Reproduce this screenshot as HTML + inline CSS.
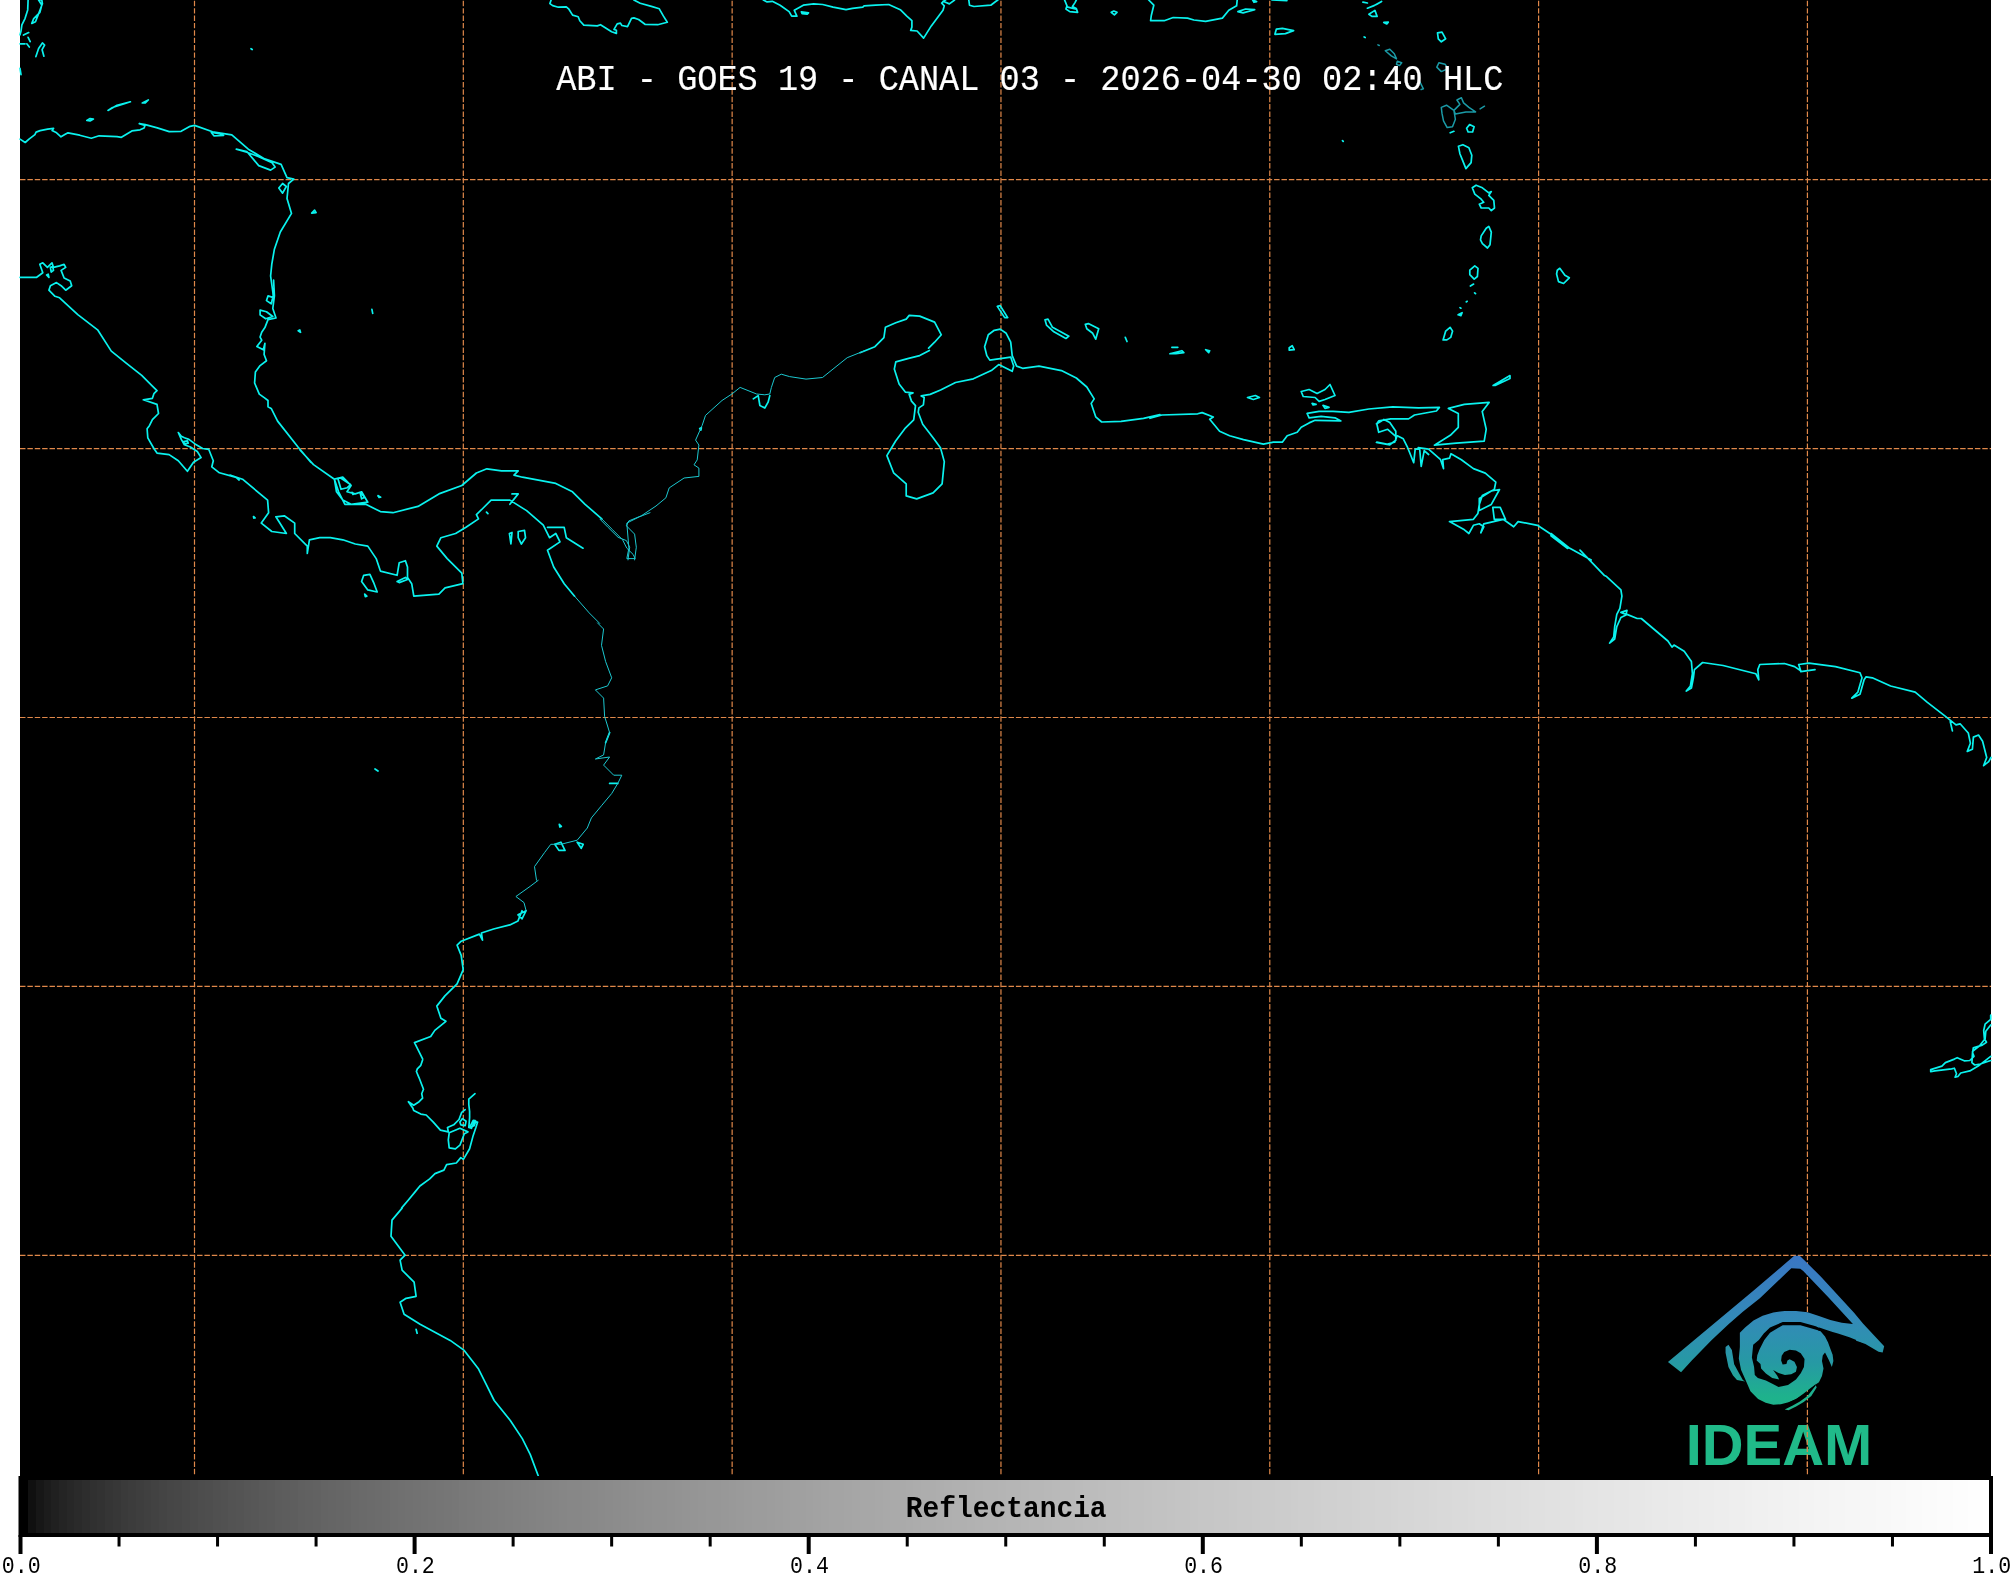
<!DOCTYPE html>
<html><head><meta charset="utf-8"><style>
html,body{margin:0;padding:0;background:#fff;width:2011px;height:1577px;overflow:hidden}
svg{display:block;will-change:transform}
</style></head><body>
<svg width="2011" height="1577" viewBox="0 0 2011 1577">
<rect x="0" y="0" width="2011" height="1577" fill="#fff"/>
<rect x="20" y="0" width="1971" height="1477" fill="#000"/>
<path d="M194.50 0.76V1476 M463.32 0.76V1476 M732.14 0.76V1476 M1000.96 0.76V1476 M1269.78 0.76V1476 M1538.60 0.76V1476 M1807.42 0.76V1476" stroke="#e0884a" stroke-width="1.2" stroke-dasharray="5.47 1.907" fill="none"/>
<path d="M20 179.60H1991 M20 448.55H1991 M20 717.50H1991 M20 986.45H1991 M20 1255.40H1991" stroke="#e0884a" stroke-width="1.2" stroke-dasharray="5.47 1.907" stroke-dashoffset="0" fill="none"/>
<path d="M28.1 0 27.7 9.9 25 18.6 21.9 24.9 21 31.1 20 34.8 M38.6 0 41.8 5 39.9 12.4 33.7 18.6 31.8 23.4 35.5 21.8 38.6 13.7 42.4 3.7 41.8 0Z M23.5 35.1 28.7 32.6 M28.1 37.3 30.2 41.6 M20 43.8 25 43.8 M26.8 43.8 29.3 47 M35.9 56.6 38.6 48.5 42.4 42.9 44.6 45 42.1 49.7 43.9 56.2 M20 68.4 21 74.6 M251 48.7 252.2 49.5Z M20 139.1 25.2 142.5 29 139.1 34.9 134.6 36.1 132.1 40.1 130.6 47.6 129.2 53.6 128.3 52.1 130.6 56.6 132.8 61 136.8 64.8 134.6 68 132.8 79.7 135.2 91.3 138.2 99.1 135.8 117 136.6 121.4 137.3 131.9 130.9 140.1 129.8 144.1 128 145 125.4 139.3 123.6 145.3 124.6 157.3 127.9 169.2 131.6 181.1 131.3 190.1 126.3 194.5 125.4 212.5 131.8 231.8 134.8 248.3 149.2 264.7 158.9 281.1 164.4 287 177.6 293.8 179.1 288.5 183.5 287 198.5 291.5 213.4 280.3 232 274.4 249.2 271.8 264.1 270.6 276 272.9 292.5 273.6 300.1 M108 110.4 117 105.2 130.4 101.8 124.4 103.7 112.5 107.5Z M86.8 120.4 90.1 118.6 93.4 119.1 90.1 120.9Z M142.3 103 148.3 100 145.3 103Z M211.3 132.5 213.9 135.8 223.6 135.5 219.9 134 212.5 132.5Z M236.3 149.2 246.8 151.5 258.7 165.6 270.6 170.1 275.1 167.1 272.1 162.7 258.7 156.7 246.8 152.2Z M278.8 188 282.6 183.5 286.3 186.5 282.6 193.2Z M311.7 213.1 314.6 210.1 316.1 212.6Z M551.1 0 549.9 3.6 552.7 5.6 558.3 7.2 566.3 6.8 568.6 8.8 572.6 15.1 578.2 16.7 579.8 20.7 583.8 25.1 597.3 25.9 600.5 24.7 611.6 31.8 616.4 33.4 616.4 30.2 614 29.4 617.2 23.9 620.4 23.1 621.9 25.5 627.5 26.7 631.5 18.3 633.9 17.9 638.6 19.5 645 24.3 657.7 24.7 667.3 22.3 663.3 15.9 659.3 8.8 651.4 6.4 640.2 3.2 633.9 0 M763.3 0 767.1 1.9 772.3 1.3 780.1 5.2 789.1 11.6 791.7 16.2 796.9 16.2 794.3 10.3 803.3 5.2 813.7 3.9 822.7 4.5 833.1 7.1 846 9.7 852.5 8.4 862.8 7.1 864.1 5.8 875.7 5.2 888.7 4.5 900.3 9.7 906.8 16.2 911.9 20.7 911.9 27.1 910.7 30.4 917.1 31 923.6 38.1 931.3 25.9 943 10.3 944.3 5.8 941.7 3.2 944.3 0.6 945.6 0 M943 1.3 949.4 3.9 954.6 0 M801.4 11.9 808.5 12.9 807.2 14.2 802.1 13.6Z M968.8 0 969.5 5.2 974 6.5 990.8 5.2 996 1.3 997.9 0 M1064.6 0 1067 5.8 1065.9 9 1069.8 11.6 1077.6 12.3 1076.3 8.4 1072.4 6.5 1075 2.6 1076.3 0 M1067.9 7.1 1076.3 9.3 M1111.2 12.3 1113.8 11 1117 12.3 1114.4 14.9Z M1148.7 0 1153.8 5.2 1151.3 15.5 1150.6 20.7 1164.2 20.7 1173.2 17.5 1187.5 18.1 1193.9 20 1205.6 21.3 1222.4 18.1 1228.8 10.3 1236.6 5.8 1237.2 0 M1237.9 11.6 1245.6 9 1254.7 9.7 1243.1 12.9Z M1252.7 0 1256.6 1.6 1254 2.3Z M1271.9 0 1286.9 0.7 M1274.9 34.3 1276.4 29.1 1282.4 28.3 1293.6 30.6 1285.4 33.6Z M1362.9 2.2 1367.4 3 M1367.4 8.2 1376.4 4.5 1381.6 1.5 1373.4 6Z M1368.9 14.2 1374.9 10.4 1377.1 16.4 1371.9 16.4Z M1383.8 22.4 1388.3 22.1 1386.8 23.9Z M1364.1 37 1365.2 37.6Z M1437.5 32.8 1442 32.1 1445.7 38.8 1441.3 41.8 1438.3 38.8Z M1466.6 128.3 1469.6 124.6 1474.1 126.8 1472.6 132 1468.1 132Z M1450.2 132.8 1453.9 131.3 M1458.4 146.2 1462.9 144.7 1468.9 147.7 1471.8 155.2 1471.1 162.6 1465.9 168.6 1462.9 161.1 1459.9 153.7Z M1342.5 140.7 1343.2 141.4Z M1472.3 187.8 1476.1 185.2 1482.4 187.8 1488.8 192.8 1491.3 191.6 1488.8 195.4 1493.8 200.4 1494.5 208 1491.3 210.6 1488.8 208 1481.2 208 1479.3 204.2 1483.7 202.3 1481.2 199.2 1474.8 194.1Z M1481.2 235.9 1486.2 228.3 1488.8 226.4 1491.3 232.1 1490 244.8 1487.5 248 1482.4 243.6 1480.5 239.8Z M1469.8 270.2 1474.8 265.8 1478 268.3 1477.4 276.5 1474.2 279.1 1469.8 274.6Z M1470.4 286 1473.6 284.1 M1474.6 292.8 1475.5 293.7Z M1466.2 301.9 1467.2 301.3Z M1460 307.6 1460.9 308.2Z M1458.1 314.8 1462.1 312.7 1460.9 315.6Z M1443.1 339.9 1445.7 331.1 1450.1 327.3 1452.6 331.1 1450.7 337.4 1446.9 339.9Z M1557.3 270.2 1559.8 268.3 1564.9 275.3 1569.3 277.8 1563.6 283.5 1558.5 281.6 1556.6 274Z M1150 418.3 1161.9 415 1197.7 413.8 1202.1 412.6 1213.3 417 1209.7 419.3 1219.6 431.3 1229.6 435.7 1243.5 439.6 1263.4 444.2 1273.3 442.2 1282.3 442.2 1287.2 435.7 1297.2 432.3 1301.2 427.3 1309.1 422.9 1315.1 420.3 1340.9 420.9 1335 417.8 1321.1 416.4 1309.1 417.8 1307.1 413.4 1319.1 411.4 1333 411.4 1348.9 412.4 1368.8 409 1392.7 406.8 1418.5 407.8 1439.4 407.4 1436.4 411 1414.5 415 1408.6 418.9 1390.7 418.9 1378.7 420.9 1376.8 423.7 1378.7 432.3 1387.7 429.3 1396.6 437.2 1394.7 442.2 1386.7 444.2 1376.8 442.2 M1448.4 408.4 1464.3 404.4 1489.1 402.4 1482.2 411.4 1486.2 429.3 1484.2 441.2 1456.3 443.2 1434.4 445.2 1450.3 435.3 1458.3 427.3 1458.3 413.4Z M1301.2 391.5 1309.1 389.5 1317.1 393.5 1325 389.5 1330 384.5 1335 395.5 1325 399.5 1319.1 401.4 1315.1 397.5 1303.2 396.5Z M1312.1 403.4 1316.1 404.4 1313.1 405Z M1323 405.4 1329 407.4 1325 408.4Z M1247.5 397.5 1255.4 395.5 1259.4 397.5 1253.4 399.5Z M1289.2 347.7 1292.2 345.7 1294.2 349.7 1289.2 350.1Z M1169.9 353.7 1181.8 350.7 1183.8 352.7 1175.9 353.7Z M1171.9 347.3 1177.8 347.3 M1205.7 349.7 1209.7 350.7 1208.7 352.7Z M1493.1 385.5 1510 375.6 1510 378.6 1495.1 385.5Z M860 352.7 874.9 346.7 883.9 337.7 885.4 327.3 895.8 322.8 906.2 319.1 909.2 315.4 919.7 316.1 934.6 322.1 941.3 334.8 934.6 342.2 928.6 348.2 M929.4 350.4 919.7 355.6 907.7 358.6 895.8 361.9 894.3 369.1 899.1 384 905.5 392.2 913 392.9 909.2 394.4 911.5 401.1 915.5 405.6 913.7 419.8 904.8 428.7 895.8 440.7 886.9 455.6 893.6 472.8 906.2 483.9 906.2 495.9 916.7 498.9 933.1 492.9 942.1 483.9 944.3 461.6 940.6 448.1 933.1 437.7 922.7 424.3 918.2 412.3 918.9 407.9 923.4 404.9 924.2 397.4 921.2 395.9 930.1 394.4 940.6 390 955.5 382.5 973.4 378.8 991.3 370.6 998.7 364.6 1003.2 366.8 1012.2 371.3 1013.7 366.1 1010.7 357.1 1000.2 358.6 989.8 360.1 986.8 355.6 984.6 346.7 988.3 334.8 994.3 330.3 1000.2 329.1 1006.2 333.3 1010.7 342.2 1012.2 355.6 1016.6 366.1 1022.6 368.3 1039 366.1 1061.4 370.6 1076.3 378 1086.8 387 1094.2 398.9 1091.2 403.4 1095.7 416.8 1101.7 422 1121.1 421.3 1143.5 418.3 1160 414.6 M997.3 306.4 1000.2 305.7 1007.7 317.6 1004.7 317.6Z M1045 319.8 1048 319.1 1052.5 327.3 1068.9 336.2 1065.9 338.5 1053.9 331.8 1046.5 325.1Z M1085.3 324.3 1088.3 323.6 1098.7 328.8 1095.7 339.2 1092.7 333.3 1086.8 328.8Z M1125.3 337.4 1127 341.5 M753.3 398.9 758.2 395.6 759.9 405.5 764.8 408 768.1 402.2 769.8 395.6 M699.7 428.6 701.4 427.7 700.9 430.2Z M1376.4 423.9 1383.9 419.4 1389.8 422.4 1395.8 431.3 1395.8 440.3 1389.8 444.8 1376.4 442.5 M1397.3 435.8 1403.3 438.8 1407.7 447.7 1413.7 462.7 1415.2 449.2 1419.7 449.2 1421.2 466.4 1424.2 450.7 1428.6 454.5 M1418.2 447.7 1428.6 449.2 1440.6 459.7 1443.5 468.6 1442.8 459.7 1449.5 458.2 1451 453.7 1461.4 459.7 1473.4 468.6 1485.3 473.1 1495.8 482.1 1494.3 489.5 1482.3 495.5 1479.3 504.4 1477.9 513.4 1473.4 519.3 1449.5 521.6 1464.4 529.8 1468.9 533.5 1473.4 525.3 1479.3 523.8 1483.8 526.8 1480.8 532.8 1483.8 523.8 1503.2 519.3 1513.7 526.8 1518.1 521.6 1537.5 525.3 1551 534.3 1568.9 547.7 1591.2 560.1 M1479.3 498.5 1491.3 491 1499.5 489.5 1491.3 504.4 1479.3 510.4Z M1492.8 507.4 1500.2 507.4 1505.5 519.3 1494.3 519.3Z M1551 533.5 1568.9 547.7 1567.4 548.4 1551 535.8Z M1580 550.1 1604.5 575.6 1606.6 576.6 1620.9 589.9 1621.9 596.1 1619.9 608.3 1616.8 614.4 1614.7 626.7 1613.7 636.9 1609.6 643.1 1614.7 639 1616.8 626.7 1620.9 617.5 1627 614.4 1637.2 618.5 1641.3 618.5 1667.9 641 1672 647.1 1674 645.1 1684.2 651.2 1691.4 661.5 1692.4 673.7 1690.4 686 1686.3 691.1 1691.4 688 1693.4 677.8 1694.4 669.6 1702.6 662.5 1723.1 665.5 1755.8 673.7 1758.8 679.8 1757.8 669.6 1759.8 664.5 1784.4 663.5 1794.6 666.6 1800.7 670.7 1798.7 664.5 1808.9 663.1 1835.5 666.6 1860 672.7 1862 677.8 1857.9 692.1 1851.8 698.2 1860 694.2 1864.1 679.8 1866.1 676.8 1872.3 677.8 1890.6 686 1915.2 692.1 1927.4 702.3 1945.8 716.6 1956 724.8 1960.1 723.8 1968.3 733 1970.4 743.2 1967.3 751.4 1972.4 749.3 1973.4 737.1 1978.5 735 1982.6 741.2 1986.7 757.5 1983.6 765.7 1988.7 761.6 1991 757.5 M1800.7 671.7 1815 669.6 M1950.3 721.7 1952.4 730.9 M1620.9 612.4 1627 610.4 1626 614.4Z M1990.7 1015.1 1990.7 1019.3 1985.1 1024.2 1983.7 1030.5 1984.4 1038.8 1986.5 1042.3 1982.3 1045.1 1973.3 1047.9 1972.6 1052.8 1974 1056.3 1969.8 1060.5 1964.2 1060.8 1957.2 1057.7 1954.4 1059.1 1945.4 1062.6 1941.9 1066.1 1930.7 1069.6 1930.7 1071.6 1934.9 1070.9 1951.6 1068.9 1954.4 1068.2 1956.5 1073.7 1955.1 1077.2 1957.9 1076.5 1960.7 1073 1969.8 1070.9 1978.2 1066.1 1990.7 1056.3 M1990.7 1024.9 1985.8 1031.2 1985.1 1038.8 1979.6 1045.8 1972.6 1051.4 1971.9 1062.6 1974.7 1065 1980.3 1064 1990.7 1060.5 M20 277.3 36.7 277.3 42.8 272.7 39.8 264.3 42.8 262.8 47.4 267.4 52 262.8 53.5 267.4 59.6 265.9 64.1 264.3 65.7 267.4 61.1 270.4 64.1 278 70.2 281.1 71.7 285.7 65.7 290.2 61.1 285.7 56.5 282.6 50.4 285.7 48.9 290.2 55 296.3 59.6 297.8 77.8 314.6 97.6 329.8 111.3 351.1 126.5 363.3 141.7 375.4 152.4 386.1 157 390.7 153.9 393.7 152.4 398.3 143.3 399.8 157 404.4 158.5 413.5 152.4 419.6 149.4 425.7 147.1 428.7 147.8 437.8 153.9 448.5 157 453.1 169.1 454.6 178.3 460.7 187.4 471.3 193.5 462.2 201.1 457.6 197.3 451.5 190.4 447 184.4 444.7 181.3 439.4 178.3 432.5 181.3 436.3 184.4 437.8 188.9 439.4 195 443.9 202.6 448.5 208.7 449.3 213.3 460.7 211.8 466.8 219.4 472.8 236.1 477.4 239.1 480 M50.4 267.4 52.7 266.6 53.5 270.4 51.2 272Z M46.6 275 48.2 274.2 48.9 277.3Z M183.6 441.6 187.4 440.9 188.2 443.2 184.4 443.9Z M273.6 280 274.4 295.9 272.8 308.5 276 318 268 319.6 264.9 327.6 261.7 332.3 260.1 337.1 261.7 340.2 256.9 346.6 263.3 349.8 264.9 343.4 264.1 354.5 266.5 360.8 260.1 365.6 255.4 371.9 254.6 383 259.3 394.1 264.9 398.1 268 400.5 268 406.8 271.2 408.4 277.6 421.1 298.2 447.2 310.8 462.3 M268 295.9 272.8 297.4 271.2 303.8 266.5 300.6Z M260.1 310.1 266.5 311.7 272.8 316.5 265.7 318.8 260.1 314.9Z M298.2 330.7 299.8 329.9 300.5 332.3Z M371.9 309.3 372.7 313.3 M337.8 478.2 341 478.2 350.5 484.5 347.3 487.7 341 489.3Z M352.1 492.4 354.4 494 352.9 494.3Z M360 492.4 364.7 497.2 361.6 498.8Z M378.2 495.6 380.6 497.2 379 497.5Z M253.5 516.5 255 517.8 253.8 518.1Z M230 475.1 242.5 479.2 267.6 500.1 268.6 512.7 261.3 523.1 271.8 531.5 286.4 533.5 275.9 516.8 284.3 515.8 294.7 523.1 294.7 533.5 307.3 546.1 307.3 553.4 309.4 539.8 319.8 537.7 330.3 537.7 342.8 539.8 355.3 544 367.8 546.1 376.2 558.6 380.4 571.1 397.1 575.3 399.2 562.8 405.4 560.7 407.5 567 407.5 577.4 411.7 583.7 413.8 596.2 438.9 594.1 445.1 587.8 462.9 583.7 461.8 573.2 447.2 558.6 436.8 546.1 440.9 537.7 455.6 533.5 466 527.3 478.5 518.9 476.4 514.7 482.7 508.5 491.1 500.1 509.9 500.1 526.6 510.6 543.3 525.2 549.5 537.7 555.8 533.5 560 541.9 547.5 550.3 553.7 567 564.2 583.7 574.6 596.2 M300 450 313.5 464.6 334.4 479.2 338.6 491.8 344.9 504.3 365.8 504.3 380.4 511.6 392.9 512.7 418 506.4 438.9 493.9 461.8 485.5 476.4 473 486.9 468.8 501.5 470.9 518.2 470.9 514 475.1 522.4 477.2 555.8 483.4 572.5 491.8 585.1 504.3 601.8 518.9 M363.7 575.3 369.9 574.3 374.1 583.7 377.2 592 367.8 589.9 361.6 581.6Z M364.7 594.1 366.8 596.2 365.3 596.6Z M397.1 581.6 405.4 577.4 407.5 579.5 399.2 582.6Z M509.4 533.5 512 532.5 510.9 544Z M518.2 531.5 524.5 530.4 525.5 537.7 521.4 544 518.2 537.7Z M486.5 512.2 487.9 513.7Z M253.6 516.8 255.1 517.9Z M377.9 495.9 380 497Z M334.4 479.2 342.8 477.2 351.1 485.5 347 491.8 355.3 493.9 361.6 491.8 367.8 502.2 351.1 504.3 342.8 500.1 336.5 491.8Z M512 493.9 518.2 493.9 509.9 504.3 M547.5 527.3 564.2 527.3 566.3 537.7 583 548.2 M559.3 824.4 561.3 826.4 559.9 827Z M554.8 844.3 560.9 842.2 565 850.4 558.9 850.4Z M577.2 842.2 583.2 844.3 581.2 848.3Z M605.6 742.7 609.6 732.6 M609.6 783.4 617.8 783.4 M522 910.7 518 920.9 509.8 924.9 493.6 929 481.4 933 482.5 940.1 479.4 934.1 461.2 941.2 457.1 945.2 461.2 955.4 463.2 969.6 457.1 983.8 444.9 995.9 436.8 1006.1 440.9 1018.2 445.9 1021.3 434.8 1030.4 430.7 1036.5 414.5 1042.6 422.6 1058.8 M518 914.8 526.1 910.7 522 918.8Z M402.1 1208.1 392 1220.1 391 1236.2 405.1 1255.2 400.1 1260.2 402.1 1270.2 414.1 1282.2 416.1 1296.3 406.1 1298.3 400.1 1302.3 404.1 1314.3 420.1 1324.3 450.2 1340.4 464.2 1350.4 478.2 1368.4 486.2 1384.4 494.2 1400.5 510.3 1420.5 522.3 1438.6 530.3 1454.6 538.3 1476 M416.1 1329.3 417.1 1333.3 M375 769 378 771Z M422.6 1060 420.8 1065.3 417.3 1068.9 416.4 1071.5 419.1 1077.8 423.5 1089.3 421.7 1093.7 422.6 1098.2 419.1 1101.7 413.7 1105.3 408.4 1101.7 410.2 1104.4 412.8 1107.9 413.7 1110.6 420.8 1114.1 426.2 1115 433.3 1122.1 440.4 1130.1 448.3 1131.9 447.5 1127.5 453.7 1124.8 459 1119.5 461.7 1112.4 465.2 1109.7 M449.2 1132.8 459.9 1128.3 467.9 1131.9 464.3 1133.7 459.9 1145.2 455.4 1148.8 449.2 1147.9 448.3 1139.9Z M459.9 1122.1 462.5 1118.6 466.1 1121.2 465.2 1125.7 460.8 1124.8Z M475 1093.7 468.8 1099.1 468.8 1104.4 469.6 1111.5 469.6 1117.7 468.8 1127.5 471.4 1128.3 475 1120.4 475.9 1122.1 477.6 1122.1 475.9 1127.5 473.2 1135.4 469.6 1148.8 463.4 1159.4 460.8 1157.6 456.3 1163 446.6 1164.7 443.9 1170.1 435 1173.6 429.7 1178.9 419.9 1186 415.5 1191.4 408.4 1200 401.7 1207.9 M469.6 1127.5 473.2 1120.4 475.9 1121.2 474.1 1125.7Z" stroke="#0af2ee" stroke-width="1.7" fill="none" stroke-linejoin="round" stroke-linecap="round"/>
<path d="M1377.9 44.8 1379.3 45.5Z M1385.3 50.7 1389.8 49.2 1394.3 53.7 1396.5 58.9 1391.3 55.9Z M1397.3 61.2 1401.7 62.7 1399.5 65.6 1396.5 64.2Z M1436.8 67.1 1439 62.7 1445 64.2 1448 68.6 1441.3 71.6Z M1419.6 81.3 1423.4 88.8 1421.1 89.5 M1441.3 107.4 1446.5 105.2 1453.9 110.4 1455.4 119.3 1452.5 126.8 1447.2 127.6 1443.5 120.8 1442 113.4Z M1453.9 110.4 1459.9 104.4 1456.9 100 1461.4 97.7 1463.6 102.9 1468.9 107.4 1475.6 111.9 1465.9 111.9 1455.4 114.1Z M1480.1 108.9 1484.5 106.2" stroke="#1a9aa6" stroke-width="1.5" fill="none" stroke-linejoin="round" stroke-linecap="round"/>
<path d="M863.7 351.1 847.2 357.7 822.5 377.5 806 379.1 789.6 376.6 781.3 374.2 774.7 377.5 771.4 387.4 769.8 394 764.8 394.8 756.6 394 740.1 387.4 731.9 394 722 400.5 705.5 415.4 702.2 425.3 695.6 440.1 698.9 445 697.2 459.9 694 464.8 698.9 468.1 698.9 476.4 684.1 478 669.2 487.9 665.9 497.8 656 506 641.2 515.9 628.8 520.9 626.4 525.8 634.6 534.1 636.3 547.2 634.6 559.9 M600 519.2 608.2 527.5 618.1 537.3 626.4 540.6 629.7 547.2 628 559.9 M574.6 596.2 589.2 612.9 599.7 623.4 M601.8 518.9 612.2 529.4 622.6 539.8 626.8 548.2 633.1 554.4 635.2 558.6 626.8 558.6 628.9 548.2 626.8 523.1 639.4 516.8 650 512.7 M597.5 622.9 603.6 629 601.5 645.3 605.6 661.5 611.7 677.8 607.6 685.9 595.4 689.9 603.6 698.1 604.6 716.3 609.6 732.6 605.6 742.7 603.6 754.9 595.4 759 609.6 757 603.6 765.1 613.7 775.2 621.8 775.2 617.8 783.4 611.7 793.5 601.5 805.7 591.4 817.9 587.3 828 577.2 840.2 560.9 844.3 550.8 844.3 544.7 852.4 534.5 866.6 536.5 880.2 M538.2 880.3 530.1 886.4 515.9 896.5 524 902.6 526.1 910.7" stroke="#1cc8d0" stroke-width="1" fill="none" stroke-linejoin="round" stroke-linecap="round"/>
<text x="1029.8" y="90" font-family="Liberation Mono" font-size="33.6" fill="#fff" stroke="#fff" stroke-width="0.15" text-anchor="middle" transform="translate(0,90) scale(1,1.09) translate(0,-90)" xml:space="preserve">ABI - GOES 19 - CANAL 03 - 2026-04-30 02:40 HLC</text>
<defs><linearGradient id="lg" gradientUnits="userSpaceOnUse" x1="0" y1="1255" x2="0" y2="1470">
<stop offset="0" stop-color="#3a76c4"/><stop offset="0.3" stop-color="#338ab8"/><stop offset="0.5" stop-color="#2699a4"/><stop offset="0.66" stop-color="#1eb28c"/><stop offset="1" stop-color="#20ba89"/>
</linearGradient></defs>
<g fill="url(#lg)"><path d="M 1667.95 1362.03 L 1754.23 1290.06 L 1794.25 1255.82 L 1799.73 1255.82 L 1805.36 1261.15 L 1820.72 1276.52 L 1854.05 1312.73 L 1863.18 1323.84 L 1884.18 1346.21 L 1882.65 1352.45 L 1878.55 1351.84 L 1864.55 1343.47 L 1856.18 1340.73 L 1852.68 1323.84 L 1828.33 1297.36 L 1803.23 1270.89 L 1800.33 1268.76 L 1791.36 1268.15 L 1759.86 1298.28 L 1742.82 1311.67 L 1728.51 1324.14 L 1711.47 1340.27 L 1692.00 1360.21 L 1681.04 1372.23 Z"/><path d="M 1852.72 1323.90 L 1841.77 1322.83 L 1830.35 1319.94 L 1818.93 1315.98 L 1807.52 1312.33 L 1796.10 1310.88 L 1784.69 1310.88 L 1773.27 1312.40 L 1762.62 1315.83 L 1753.49 1320.40 L 1745.11 1327.40 L 1739.86 1332.80 L 1739.86 1347.11 L 1738.80 1358.45 L 1741.00 1369.86 L 1745.57 1379.98 L 1750.44 1391.32 L 1758.05 1398.93 L 1765.66 1402.74 L 1773.27 1404.64 L 1780.88 1404.26 L 1788.49 1402.36 L 1796.10 1398.93 L 1803.71 1393.61 L 1811.32 1387.52 L 1818.93 1382.19 L 1821.98 1376.10 L 1823.50 1368.49 L 1821.98 1360.88 L 1822.74 1355.56 L 1825.02 1352.51 L 1828.83 1360.12 L 1831.87 1366.97 L 1833.39 1360.88 L 1832.63 1354.79 L 1830.35 1348.71 L 1828.07 1342.62 L 1825.02 1336.53 L 1821.22 1331.96 L 1820.68 1331.28 L 1817.87 1330.21 L 1819.32 1327.40 L 1826.54 1330.06 L 1832.63 1331.96 L 1837.96 1333.49 L 1849.38 1337.29 L 1860.03 1341.48 L 1864.60 1343.76 L 1864.60 1331.96 Z"/><path d="M 1728.45 1344.75 L 1731.87 1349.92 L 1734.16 1364.16 L 1738.80 1372.75 L 1742.83 1379.98 L 1745.11 1381.43 L 1736.97 1379.98 L 1733.01 1375.57 L 1728.45 1366.97 L 1725.56 1352.82 L 1725.56 1346.96 Z"/><path d="M 1784.69 1409.59 L 1792.30 1405.78 L 1799.91 1401.60 L 1807.52 1395.89 L 1815.89 1385.24 L 1816.65 1387.52 L 1811.32 1395.89 L 1803.71 1401.98 L 1796.10 1406.54 L 1788.49 1410.35 Z"/></g>
<g fill="#000"><path d="M 1821.22 1328.77 L 1815.74 1326.26 L 1800.44 1322.07 L 1782.71 1322.07 L 1770.00 1327.55 L 1763.76 1333.49 L 1758.89 1339.95 L 1753.18 1344.75 L 1751.89 1357.46 L 1754.09 1366.97 L 1754.78 1374.89 L 1757.90 1378.08 L 1765.89 1380.59 L 1773.81 1384.40 L 1778.52 1386.91 L 1788.04 1385.01 L 1795.95 1379.60 L 1800.75 1373.29 L 1803.94 1366.97 L 1804.55 1359.06 L 1800.75 1353.35 L 1795.95 1350.46 L 1789.63 1349.85 L 1784.23 1352.05 L 1781.72 1355.86 L 1781.11 1360.58 L 1782.63 1364.38 L 1786.44 1364.08 L 1787.43 1360.58 L 1789.63 1359.36 L 1794.43 1361.87 L 1796.94 1366.97 L 1795.95 1371.69 L 1791.23 1374.28 L 1784.92 1374.89 L 1778.52 1372.98 L 1773.12 1370.09 L 1777.31 1375.80 L 1779.21 1379.60 L 1772.21 1378.08 L 1765.89 1373.59 L 1761.10 1368.57 L 1760.49 1364.08 L 1756.68 1360.58 L 1757.29 1355.25 L 1759.50 1349.54 L 1764.29 1340.03 L 1770.00 1332.80 L 1782.71 1325.19 L 1800.44 1325.19 L 1817.87 1330.21 L 1820.68 1331.28 Z"/><path d="M 1786.97 1403.50 C 1796.10 1398.93 1807.52 1393.61 1815.89 1383.71 L 1814.37 1386.76 C 1807.52 1395.13 1797.63 1401.22 1788.49 1405.78 Z"/></g>
<text x="1779" y="1465.3" font-family="Liberation Sans" font-weight="bold" font-size="57.2" fill="#20ba89" text-anchor="middle" transform="translate(1779,0) scale(1.012,1) translate(-1779,0)">IDEAM</text>
<path d="M1807.3 0.76V1476" stroke="#e0884a" stroke-width="1.2" stroke-dasharray="5.47 1.907" fill="none" clip-path="url(#txtclip)"/>
<clipPath id="txtclip"><rect x="1790" y="1420" width="40" height="50"/></clipPath>
<g shape-rendering="crispEdges"><rect x="20.50" y="1478" width="8.30" height="57" fill="rgb(0,0,0)"/>
<rect x="28.20" y="1478" width="8.30" height="57" fill="rgb(16,16,16)"/>
<rect x="35.89" y="1478" width="8.30" height="57" fill="rgb(23,23,23)"/>
<rect x="43.59" y="1478" width="8.30" height="57" fill="rgb(28,28,28)"/>
<rect x="51.29" y="1478" width="8.30" height="57" fill="rgb(32,32,32)"/>
<rect x="58.99" y="1478" width="8.30" height="57" fill="rgb(36,36,36)"/>
<rect x="66.68" y="1478" width="8.30" height="57" fill="rgb(39,39,39)"/>
<rect x="74.38" y="1478" width="8.30" height="57" fill="rgb(42,42,42)"/>
<rect x="82.08" y="1478" width="8.30" height="57" fill="rgb(45,45,45)"/>
<rect x="89.78" y="1478" width="8.30" height="57" fill="rgb(48,48,48)"/>
<rect x="97.47" y="1478" width="8.30" height="57" fill="rgb(50,50,50)"/>
<rect x="105.17" y="1478" width="8.30" height="57" fill="rgb(53,53,53)"/>
<rect x="112.87" y="1478" width="8.30" height="57" fill="rgb(55,55,55)"/>
<rect x="120.56" y="1478" width="8.30" height="57" fill="rgb(58,58,58)"/>
<rect x="128.26" y="1478" width="8.30" height="57" fill="rgb(60,60,60)"/>
<rect x="135.96" y="1478" width="8.30" height="57" fill="rgb(62,62,62)"/>
<rect x="143.66" y="1478" width="8.30" height="57" fill="rgb(64,64,64)"/>
<rect x="151.35" y="1478" width="8.30" height="57" fill="rgb(66,66,66)"/>
<rect x="159.05" y="1478" width="8.30" height="57" fill="rgb(68,68,68)"/>
<rect x="166.75" y="1478" width="8.30" height="57" fill="rgb(70,70,70)"/>
<rect x="174.45" y="1478" width="8.30" height="57" fill="rgb(71,71,71)"/>
<rect x="182.14" y="1478" width="8.30" height="57" fill="rgb(73,73,73)"/>
<rect x="189.84" y="1478" width="8.30" height="57" fill="rgb(75,75,75)"/>
<rect x="197.54" y="1478" width="8.30" height="57" fill="rgb(77,77,77)"/>
<rect x="205.23" y="1478" width="8.30" height="57" fill="rgb(78,78,78)"/>
<rect x="212.93" y="1478" width="8.30" height="57" fill="rgb(80,80,80)"/>
<rect x="220.63" y="1478" width="8.30" height="57" fill="rgb(81,81,81)"/>
<rect x="228.33" y="1478" width="8.30" height="57" fill="rgb(83,83,83)"/>
<rect x="236.02" y="1478" width="8.30" height="57" fill="rgb(84,84,84)"/>
<rect x="243.72" y="1478" width="8.30" height="57" fill="rgb(86,86,86)"/>
<rect x="251.42" y="1478" width="8.30" height="57" fill="rgb(87,87,87)"/>
<rect x="259.12" y="1478" width="8.30" height="57" fill="rgb(89,89,89)"/>
<rect x="266.81" y="1478" width="8.30" height="57" fill="rgb(90,90,90)"/>
<rect x="274.51" y="1478" width="8.30" height="57" fill="rgb(92,92,92)"/>
<rect x="282.21" y="1478" width="8.30" height="57" fill="rgb(93,93,93)"/>
<rect x="289.90" y="1478" width="8.30" height="57" fill="rgb(94,94,94)"/>
<rect x="297.60" y="1478" width="8.30" height="57" fill="rgb(96,96,96)"/>
<rect x="305.30" y="1478" width="8.30" height="57" fill="rgb(97,97,97)"/>
<rect x="313.00" y="1478" width="8.30" height="57" fill="rgb(98,98,98)"/>
<rect x="320.69" y="1478" width="8.30" height="57" fill="rgb(100,100,100)"/>
<rect x="328.39" y="1478" width="8.30" height="57" fill="rgb(101,101,101)"/>
<rect x="336.09" y="1478" width="8.30" height="57" fill="rgb(102,102,102)"/>
<rect x="343.79" y="1478" width="8.30" height="57" fill="rgb(103,103,103)"/>
<rect x="351.48" y="1478" width="8.30" height="57" fill="rgb(105,105,105)"/>
<rect x="359.18" y="1478" width="8.30" height="57" fill="rgb(106,106,106)"/>
<rect x="366.88" y="1478" width="8.30" height="57" fill="rgb(107,107,107)"/>
<rect x="374.57" y="1478" width="8.30" height="57" fill="rgb(108,108,108)"/>
<rect x="382.27" y="1478" width="8.30" height="57" fill="rgb(109,109,109)"/>
<rect x="389.97" y="1478" width="8.30" height="57" fill="rgb(111,111,111)"/>
<rect x="397.67" y="1478" width="8.30" height="57" fill="rgb(112,112,112)"/>
<rect x="405.36" y="1478" width="8.30" height="57" fill="rgb(113,113,113)"/>
<rect x="413.06" y="1478" width="8.30" height="57" fill="rgb(114,114,114)"/>
<rect x="420.76" y="1478" width="8.30" height="57" fill="rgb(115,115,115)"/>
<rect x="428.46" y="1478" width="8.30" height="57" fill="rgb(116,116,116)"/>
<rect x="436.15" y="1478" width="8.30" height="57" fill="rgb(117,117,117)"/>
<rect x="443.85" y="1478" width="8.30" height="57" fill="rgb(118,118,118)"/>
<rect x="451.55" y="1478" width="8.30" height="57" fill="rgb(119,119,119)"/>
<rect x="459.24" y="1478" width="8.30" height="57" fill="rgb(121,121,121)"/>
<rect x="466.94" y="1478" width="8.30" height="57" fill="rgb(122,122,122)"/>
<rect x="474.64" y="1478" width="8.30" height="57" fill="rgb(123,123,123)"/>
<rect x="482.34" y="1478" width="8.30" height="57" fill="rgb(124,124,124)"/>
<rect x="490.03" y="1478" width="8.30" height="57" fill="rgb(125,125,125)"/>
<rect x="497.73" y="1478" width="8.30" height="57" fill="rgb(126,126,126)"/>
<rect x="505.43" y="1478" width="8.30" height="57" fill="rgb(127,127,127)"/>
<rect x="513.12" y="1478" width="8.30" height="57" fill="rgb(128,128,128)"/>
<rect x="520.82" y="1478" width="8.30" height="57" fill="rgb(129,129,129)"/>
<rect x="528.52" y="1478" width="8.30" height="57" fill="rgb(130,130,130)"/>
<rect x="536.22" y="1478" width="8.30" height="57" fill="rgb(131,131,131)"/>
<rect x="543.91" y="1478" width="8.30" height="57" fill="rgb(132,132,132)"/>
<rect x="551.61" y="1478" width="8.30" height="57" fill="rgb(133,133,133)"/>
<rect x="559.31" y="1478" width="8.30" height="57" fill="rgb(134,134,134)"/>
<rect x="567.01" y="1478" width="8.30" height="57" fill="rgb(135,135,135)"/>
<rect x="574.70" y="1478" width="8.30" height="57" fill="rgb(135,135,135)"/>
<rect x="582.40" y="1478" width="8.30" height="57" fill="rgb(136,136,136)"/>
<rect x="590.10" y="1478" width="8.30" height="57" fill="rgb(137,137,137)"/>
<rect x="597.79" y="1478" width="8.30" height="57" fill="rgb(138,138,138)"/>
<rect x="605.49" y="1478" width="8.30" height="57" fill="rgb(139,139,139)"/>
<rect x="613.19" y="1478" width="8.30" height="57" fill="rgb(140,140,140)"/>
<rect x="620.89" y="1478" width="8.30" height="57" fill="rgb(141,141,141)"/>
<rect x="628.58" y="1478" width="8.30" height="57" fill="rgb(142,142,142)"/>
<rect x="636.28" y="1478" width="8.30" height="57" fill="rgb(143,143,143)"/>
<rect x="643.98" y="1478" width="8.30" height="57" fill="rgb(144,144,144)"/>
<rect x="651.68" y="1478" width="8.30" height="57" fill="rgb(145,145,145)"/>
<rect x="659.37" y="1478" width="8.30" height="57" fill="rgb(145,145,145)"/>
<rect x="667.07" y="1478" width="8.30" height="57" fill="rgb(146,146,146)"/>
<rect x="674.77" y="1478" width="8.30" height="57" fill="rgb(147,147,147)"/>
<rect x="682.46" y="1478" width="8.30" height="57" fill="rgb(148,148,148)"/>
<rect x="690.16" y="1478" width="8.30" height="57" fill="rgb(149,149,149)"/>
<rect x="697.86" y="1478" width="8.30" height="57" fill="rgb(150,150,150)"/>
<rect x="705.56" y="1478" width="8.30" height="57" fill="rgb(151,151,151)"/>
<rect x="713.25" y="1478" width="8.30" height="57" fill="rgb(151,151,151)"/>
<rect x="720.95" y="1478" width="8.30" height="57" fill="rgb(152,152,152)"/>
<rect x="728.65" y="1478" width="8.30" height="57" fill="rgb(153,153,153)"/>
<rect x="736.35" y="1478" width="8.30" height="57" fill="rgb(154,154,154)"/>
<rect x="744.04" y="1478" width="8.30" height="57" fill="rgb(155,155,155)"/>
<rect x="751.74" y="1478" width="8.30" height="57" fill="rgb(156,156,156)"/>
<rect x="759.44" y="1478" width="8.30" height="57" fill="rgb(156,156,156)"/>
<rect x="767.13" y="1478" width="8.30" height="57" fill="rgb(157,157,157)"/>
<rect x="774.83" y="1478" width="8.30" height="57" fill="rgb(158,158,158)"/>
<rect x="782.53" y="1478" width="8.30" height="57" fill="rgb(159,159,159)"/>
<rect x="790.23" y="1478" width="8.30" height="57" fill="rgb(160,160,160)"/>
<rect x="797.92" y="1478" width="8.30" height="57" fill="rgb(160,160,160)"/>
<rect x="805.62" y="1478" width="8.30" height="57" fill="rgb(161,161,161)"/>
<rect x="813.32" y="1478" width="8.30" height="57" fill="rgb(162,162,162)"/>
<rect x="821.02" y="1478" width="8.30" height="57" fill="rgb(163,163,163)"/>
<rect x="828.71" y="1478" width="8.30" height="57" fill="rgb(164,164,164)"/>
<rect x="836.41" y="1478" width="8.30" height="57" fill="rgb(164,164,164)"/>
<rect x="844.11" y="1478" width="8.30" height="57" fill="rgb(165,165,165)"/>
<rect x="851.80" y="1478" width="8.30" height="57" fill="rgb(166,166,166)"/>
<rect x="859.50" y="1478" width="8.30" height="57" fill="rgb(167,167,167)"/>
<rect x="867.20" y="1478" width="8.30" height="57" fill="rgb(167,167,167)"/>
<rect x="874.90" y="1478" width="8.30" height="57" fill="rgb(168,168,168)"/>
<rect x="882.59" y="1478" width="8.30" height="57" fill="rgb(169,169,169)"/>
<rect x="890.29" y="1478" width="8.30" height="57" fill="rgb(170,170,170)"/>
<rect x="897.99" y="1478" width="8.30" height="57" fill="rgb(170,170,170)"/>
<rect x="905.69" y="1478" width="8.30" height="57" fill="rgb(171,171,171)"/>
<rect x="913.38" y="1478" width="8.30" height="57" fill="rgb(172,172,172)"/>
<rect x="921.08" y="1478" width="8.30" height="57" fill="rgb(173,173,173)"/>
<rect x="928.78" y="1478" width="8.30" height="57" fill="rgb(173,173,173)"/>
<rect x="936.47" y="1478" width="8.30" height="57" fill="rgb(174,174,174)"/>
<rect x="944.17" y="1478" width="8.30" height="57" fill="rgb(175,175,175)"/>
<rect x="951.87" y="1478" width="8.30" height="57" fill="rgb(176,176,176)"/>
<rect x="959.57" y="1478" width="8.30" height="57" fill="rgb(176,176,176)"/>
<rect x="967.26" y="1478" width="8.30" height="57" fill="rgb(177,177,177)"/>
<rect x="974.96" y="1478" width="8.30" height="57" fill="rgb(178,178,178)"/>
<rect x="982.66" y="1478" width="8.30" height="57" fill="rgb(179,179,179)"/>
<rect x="990.36" y="1478" width="8.30" height="57" fill="rgb(179,179,179)"/>
<rect x="998.05" y="1478" width="8.30" height="57" fill="rgb(180,180,180)"/>
<rect x="1005.75" y="1478" width="8.30" height="57" fill="rgb(181,181,181)"/>
<rect x="1013.45" y="1478" width="8.30" height="57" fill="rgb(181,181,181)"/>
<rect x="1021.14" y="1478" width="8.30" height="57" fill="rgb(182,182,182)"/>
<rect x="1028.84" y="1478" width="8.30" height="57" fill="rgb(183,183,183)"/>
<rect x="1036.54" y="1478" width="8.30" height="57" fill="rgb(183,183,183)"/>
<rect x="1044.24" y="1478" width="8.30" height="57" fill="rgb(184,184,184)"/>
<rect x="1051.93" y="1478" width="8.30" height="57" fill="rgb(185,185,185)"/>
<rect x="1059.63" y="1478" width="8.30" height="57" fill="rgb(186,186,186)"/>
<rect x="1067.33" y="1478" width="8.30" height="57" fill="rgb(186,186,186)"/>
<rect x="1075.03" y="1478" width="8.30" height="57" fill="rgb(187,187,187)"/>
<rect x="1082.72" y="1478" width="8.30" height="57" fill="rgb(188,188,188)"/>
<rect x="1090.42" y="1478" width="8.30" height="57" fill="rgb(188,188,188)"/>
<rect x="1098.12" y="1478" width="8.30" height="57" fill="rgb(189,189,189)"/>
<rect x="1105.81" y="1478" width="8.30" height="57" fill="rgb(190,190,190)"/>
<rect x="1113.51" y="1478" width="8.30" height="57" fill="rgb(190,190,190)"/>
<rect x="1121.21" y="1478" width="8.30" height="57" fill="rgb(191,191,191)"/>
<rect x="1128.91" y="1478" width="8.30" height="57" fill="rgb(192,192,192)"/>
<rect x="1136.60" y="1478" width="8.30" height="57" fill="rgb(192,192,192)"/>
<rect x="1144.30" y="1478" width="8.30" height="57" fill="rgb(193,193,193)"/>
<rect x="1152.00" y="1478" width="8.30" height="57" fill="rgb(194,194,194)"/>
<rect x="1159.70" y="1478" width="8.30" height="57" fill="rgb(194,194,194)"/>
<rect x="1167.39" y="1478" width="8.30" height="57" fill="rgb(195,195,195)"/>
<rect x="1175.09" y="1478" width="8.30" height="57" fill="rgb(196,196,196)"/>
<rect x="1182.79" y="1478" width="8.30" height="57" fill="rgb(196,196,196)"/>
<rect x="1190.48" y="1478" width="8.30" height="57" fill="rgb(197,197,197)"/>
<rect x="1198.18" y="1478" width="8.30" height="57" fill="rgb(198,198,198)"/>
<rect x="1205.88" y="1478" width="8.30" height="57" fill="rgb(198,198,198)"/>
<rect x="1213.58" y="1478" width="8.30" height="57" fill="rgb(199,199,199)"/>
<rect x="1221.27" y="1478" width="8.30" height="57" fill="rgb(199,199,199)"/>
<rect x="1228.97" y="1478" width="8.30" height="57" fill="rgb(200,200,200)"/>
<rect x="1236.67" y="1478" width="8.30" height="57" fill="rgb(201,201,201)"/>
<rect x="1244.37" y="1478" width="8.30" height="57" fill="rgb(201,201,201)"/>
<rect x="1252.06" y="1478" width="8.30" height="57" fill="rgb(202,202,202)"/>
<rect x="1259.76" y="1478" width="8.30" height="57" fill="rgb(203,203,203)"/>
<rect x="1267.46" y="1478" width="8.30" height="57" fill="rgb(203,203,203)"/>
<rect x="1275.15" y="1478" width="8.30" height="57" fill="rgb(204,204,204)"/>
<rect x="1282.85" y="1478" width="8.30" height="57" fill="rgb(204,204,204)"/>
<rect x="1290.55" y="1478" width="8.30" height="57" fill="rgb(205,205,205)"/>
<rect x="1298.25" y="1478" width="8.30" height="57" fill="rgb(206,206,206)"/>
<rect x="1305.94" y="1478" width="8.30" height="57" fill="rgb(206,206,206)"/>
<rect x="1313.64" y="1478" width="8.30" height="57" fill="rgb(207,207,207)"/>
<rect x="1321.34" y="1478" width="8.30" height="57" fill="rgb(208,208,208)"/>
<rect x="1329.04" y="1478" width="8.30" height="57" fill="rgb(208,208,208)"/>
<rect x="1336.73" y="1478" width="8.30" height="57" fill="rgb(209,209,209)"/>
<rect x="1344.43" y="1478" width="8.30" height="57" fill="rgb(209,209,209)"/>
<rect x="1352.13" y="1478" width="8.30" height="57" fill="rgb(210,210,210)"/>
<rect x="1359.82" y="1478" width="8.30" height="57" fill="rgb(211,211,211)"/>
<rect x="1367.52" y="1478" width="8.30" height="57" fill="rgb(211,211,211)"/>
<rect x="1375.22" y="1478" width="8.30" height="57" fill="rgb(212,212,212)"/>
<rect x="1382.92" y="1478" width="8.30" height="57" fill="rgb(212,212,212)"/>
<rect x="1390.61" y="1478" width="8.30" height="57" fill="rgb(213,213,213)"/>
<rect x="1398.31" y="1478" width="8.30" height="57" fill="rgb(214,214,214)"/>
<rect x="1406.01" y="1478" width="8.30" height="57" fill="rgb(214,214,214)"/>
<rect x="1413.71" y="1478" width="8.30" height="57" fill="rgb(215,215,215)"/>
<rect x="1421.40" y="1478" width="8.30" height="57" fill="rgb(215,215,215)"/>
<rect x="1429.10" y="1478" width="8.30" height="57" fill="rgb(216,216,216)"/>
<rect x="1436.80" y="1478" width="8.30" height="57" fill="rgb(217,217,217)"/>
<rect x="1444.49" y="1478" width="8.30" height="57" fill="rgb(217,217,217)"/>
<rect x="1452.19" y="1478" width="8.30" height="57" fill="rgb(218,218,218)"/>
<rect x="1459.89" y="1478" width="8.30" height="57" fill="rgb(218,218,218)"/>
<rect x="1467.59" y="1478" width="8.30" height="57" fill="rgb(219,219,219)"/>
<rect x="1475.28" y="1478" width="8.30" height="57" fill="rgb(220,220,220)"/>
<rect x="1482.98" y="1478" width="8.30" height="57" fill="rgb(220,220,220)"/>
<rect x="1490.68" y="1478" width="8.30" height="57" fill="rgb(221,221,221)"/>
<rect x="1498.38" y="1478" width="8.30" height="57" fill="rgb(221,221,221)"/>
<rect x="1506.07" y="1478" width="8.30" height="57" fill="rgb(222,222,222)"/>
<rect x="1513.77" y="1478" width="8.30" height="57" fill="rgb(222,222,222)"/>
<rect x="1521.47" y="1478" width="8.30" height="57" fill="rgb(223,223,223)"/>
<rect x="1529.16" y="1478" width="8.30" height="57" fill="rgb(224,224,224)"/>
<rect x="1536.86" y="1478" width="8.30" height="57" fill="rgb(224,224,224)"/>
<rect x="1544.56" y="1478" width="8.30" height="57" fill="rgb(225,225,225)"/>
<rect x="1552.26" y="1478" width="8.30" height="57" fill="rgb(225,225,225)"/>
<rect x="1559.95" y="1478" width="8.30" height="57" fill="rgb(226,226,226)"/>
<rect x="1567.65" y="1478" width="8.30" height="57" fill="rgb(226,226,226)"/>
<rect x="1575.35" y="1478" width="8.30" height="57" fill="rgb(227,227,227)"/>
<rect x="1583.04" y="1478" width="8.30" height="57" fill="rgb(228,228,228)"/>
<rect x="1590.74" y="1478" width="8.30" height="57" fill="rgb(228,228,228)"/>
<rect x="1598.44" y="1478" width="8.30" height="57" fill="rgb(229,229,229)"/>
<rect x="1606.14" y="1478" width="8.30" height="57" fill="rgb(229,229,229)"/>
<rect x="1613.83" y="1478" width="8.30" height="57" fill="rgb(230,230,230)"/>
<rect x="1621.53" y="1478" width="8.30" height="57" fill="rgb(230,230,230)"/>
<rect x="1629.23" y="1478" width="8.30" height="57" fill="rgb(231,231,231)"/>
<rect x="1636.93" y="1478" width="8.30" height="57" fill="rgb(231,231,231)"/>
<rect x="1644.62" y="1478" width="8.30" height="57" fill="rgb(232,232,232)"/>
<rect x="1652.32" y="1478" width="8.30" height="57" fill="rgb(233,233,233)"/>
<rect x="1660.02" y="1478" width="8.30" height="57" fill="rgb(233,233,233)"/>
<rect x="1667.71" y="1478" width="8.30" height="57" fill="rgb(234,234,234)"/>
<rect x="1675.41" y="1478" width="8.30" height="57" fill="rgb(234,234,234)"/>
<rect x="1683.11" y="1478" width="8.30" height="57" fill="rgb(235,235,235)"/>
<rect x="1690.81" y="1478" width="8.30" height="57" fill="rgb(235,235,235)"/>
<rect x="1698.50" y="1478" width="8.30" height="57" fill="rgb(236,236,236)"/>
<rect x="1706.20" y="1478" width="8.30" height="57" fill="rgb(236,236,236)"/>
<rect x="1713.90" y="1478" width="8.30" height="57" fill="rgb(237,237,237)"/>
<rect x="1721.60" y="1478" width="8.30" height="57" fill="rgb(237,237,237)"/>
<rect x="1729.29" y="1478" width="8.30" height="57" fill="rgb(238,238,238)"/>
<rect x="1736.99" y="1478" width="8.30" height="57" fill="rgb(238,238,238)"/>
<rect x="1744.69" y="1478" width="8.30" height="57" fill="rgb(239,239,239)"/>
<rect x="1752.38" y="1478" width="8.30" height="57" fill="rgb(240,240,240)"/>
<rect x="1760.08" y="1478" width="8.30" height="57" fill="rgb(240,240,240)"/>
<rect x="1767.78" y="1478" width="8.30" height="57" fill="rgb(241,241,241)"/>
<rect x="1775.48" y="1478" width="8.30" height="57" fill="rgb(241,241,241)"/>
<rect x="1783.17" y="1478" width="8.30" height="57" fill="rgb(242,242,242)"/>
<rect x="1790.87" y="1478" width="8.30" height="57" fill="rgb(242,242,242)"/>
<rect x="1798.57" y="1478" width="8.30" height="57" fill="rgb(243,243,243)"/>
<rect x="1806.27" y="1478" width="8.30" height="57" fill="rgb(243,243,243)"/>
<rect x="1813.96" y="1478" width="8.30" height="57" fill="rgb(244,244,244)"/>
<rect x="1821.66" y="1478" width="8.30" height="57" fill="rgb(244,244,244)"/>
<rect x="1829.36" y="1478" width="8.30" height="57" fill="rgb(245,245,245)"/>
<rect x="1837.05" y="1478" width="8.30" height="57" fill="rgb(245,245,245)"/>
<rect x="1844.75" y="1478" width="8.30" height="57" fill="rgb(246,246,246)"/>
<rect x="1852.45" y="1478" width="8.30" height="57" fill="rgb(246,246,246)"/>
<rect x="1860.15" y="1478" width="8.30" height="57" fill="rgb(247,247,247)"/>
<rect x="1867.84" y="1478" width="8.30" height="57" fill="rgb(247,247,247)"/>
<rect x="1875.54" y="1478" width="8.30" height="57" fill="rgb(248,248,248)"/>
<rect x="1883.24" y="1478" width="8.30" height="57" fill="rgb(248,248,248)"/>
<rect x="1890.94" y="1478" width="8.30" height="57" fill="rgb(249,249,249)"/>
<rect x="1898.63" y="1478" width="8.30" height="57" fill="rgb(249,249,249)"/>
<rect x="1906.33" y="1478" width="8.30" height="57" fill="rgb(250,250,250)"/>
<rect x="1914.03" y="1478" width="8.30" height="57" fill="rgb(250,250,250)"/>
<rect x="1921.72" y="1478" width="8.30" height="57" fill="rgb(251,251,251)"/>
<rect x="1929.42" y="1478" width="8.30" height="57" fill="rgb(251,251,251)"/>
<rect x="1937.12" y="1478" width="8.30" height="57" fill="rgb(252,252,252)"/>
<rect x="1944.82" y="1478" width="8.30" height="57" fill="rgb(252,252,252)"/>
<rect x="1952.51" y="1478" width="8.30" height="57" fill="rgb(253,253,253)"/>
<rect x="1960.21" y="1478" width="8.30" height="57" fill="rgb(253,253,253)"/>
<rect x="1967.91" y="1478" width="8.30" height="57" fill="rgb(254,254,254)"/>
<rect x="1975.61" y="1478" width="8.30" height="57" fill="rgb(254,254,254)"/>
<rect x="1983.30" y="1478" width="8.30" height="57" fill="rgb(255,255,255)"/></g>
<rect x="20.5" y="1478" width="1970.5" height="57" fill="none" stroke="#000" stroke-width="4"/>
<text x="1006.2" y="1517" font-family="Liberation Mono" font-weight="bold" font-size="27.9" fill="#000" text-anchor="middle" transform="translate(0,1517) scale(1,1.06) translate(0,-1517)">Reflectancia</text>
<rect x="18.50" y="1535" width="4" height="19" fill="#000"/>
<rect x="117.53" y="1535" width="3" height="11.5" fill="#000"/>
<rect x="216.05" y="1535" width="3" height="11.5" fill="#000"/>
<rect x="314.57" y="1535" width="3" height="11.5" fill="#000"/>
<rect x="412.60" y="1535" width="4" height="19" fill="#000"/>
<rect x="511.62" y="1535" width="3" height="11.5" fill="#000"/>
<rect x="610.15" y="1535" width="3" height="11.5" fill="#000"/>
<rect x="708.67" y="1535" width="3" height="11.5" fill="#000"/>
<rect x="806.70" y="1535" width="4" height="19" fill="#000"/>
<rect x="905.73" y="1535" width="3" height="11.5" fill="#000"/>
<rect x="1004.25" y="1535" width="3" height="11.5" fill="#000"/>
<rect x="1102.78" y="1535" width="3" height="11.5" fill="#000"/>
<rect x="1200.80" y="1535" width="4" height="19" fill="#000"/>
<rect x="1299.83" y="1535" width="3" height="11.5" fill="#000"/>
<rect x="1398.35" y="1535" width="3" height="11.5" fill="#000"/>
<rect x="1496.88" y="1535" width="3" height="11.5" fill="#000"/>
<rect x="1594.90" y="1535" width="4" height="19" fill="#000"/>
<rect x="1693.92" y="1535" width="3" height="11.5" fill="#000"/>
<rect x="1792.45" y="1535" width="3" height="11.5" fill="#000"/>
<rect x="1890.97" y="1535" width="3" height="11.5" fill="#000"/>
<rect x="1989.00" y="1535" width="4" height="19" fill="#000"/>
<text x="21.3" y="1573" font-family="Liberation Mono" font-size="21.6" fill="#000" text-anchor="middle" transform="translate(0,1573) scale(1,1.13) translate(0,-1573)">0.0</text>
<text x="415.4" y="1573" font-family="Liberation Mono" font-size="21.6" fill="#000" text-anchor="middle" transform="translate(0,1573) scale(1,1.13) translate(0,-1573)">0.2</text>
<text x="809.5" y="1573" font-family="Liberation Mono" font-size="21.6" fill="#000" text-anchor="middle" transform="translate(0,1573) scale(1,1.13) translate(0,-1573)">0.4</text>
<text x="1203.6" y="1573" font-family="Liberation Mono" font-size="21.6" fill="#000" text-anchor="middle" transform="translate(0,1573) scale(1,1.13) translate(0,-1573)">0.6</text>
<text x="1597.7" y="1573" font-family="Liberation Mono" font-size="21.6" fill="#000" text-anchor="middle" transform="translate(0,1573) scale(1,1.13) translate(0,-1573)">0.8</text>
<text x="1991.8" y="1573" font-family="Liberation Mono" font-size="21.6" fill="#000" text-anchor="middle" transform="translate(0,1573) scale(1,1.13) translate(0,-1573)">1.0</text>
</svg></body></html>
